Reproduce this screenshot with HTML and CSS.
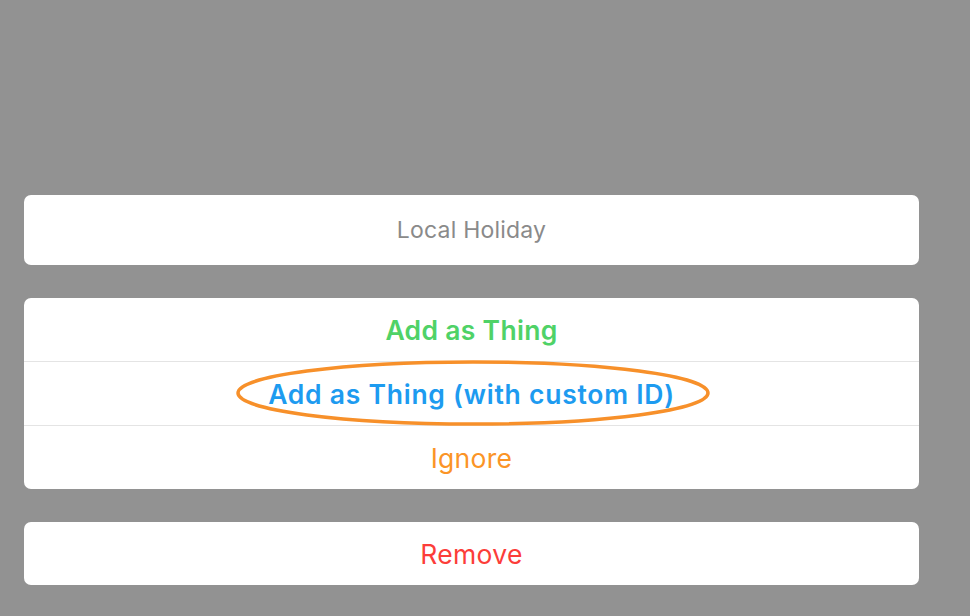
FILE: index.html
```html
<!DOCTYPE html>
<html lang="en">
<head>
<meta charset="utf-8">
<link rel="stylesheet" href="styles.css">
</head>
<body>
<div class="sheet">
  <div class="card title-card">
    <div class="row title">Local Holiday</div>
  </div>
  <div class="card actions">
    <div class="row green">Add as Thing</div>
    <div class="row blue">Add as Thing (with custom ID)</div>
    <div class="row orange">Ignore</div>
    <svg class="ring" width="480" height="70" viewBox="0 0 480 70">
      <ellipse cx="240" cy="35" rx="235" ry="31" fill="none" stroke="#f7902a" stroke-width="3.5"/>
    </svg>
  </div>
  <div class="card">
    <div class="row red">Remove</div>
  </div>
</div>
</body>
</html>
```
FILE: styles.css
```css
html, body {
  margin: 0;
  padding: 0;
  background: #929292;
  height: 100%;
}
body {
  font-family: Inter, "Open Sans", "Liberation Sans", sans-serif;
}
.sheet {
  padding: 195px 51px 0 24px;
  display: flex;
  flex-direction: column;
  gap: 33px;
}
.card {
  background: #ffffff;
  border-radius: 7px;
  display: flex;
  flex-direction: column;
  position: relative;
}
.row {
  height: 63px;
  display: flex;
  align-items: center;
  justify-content: center;
  font-size: 26.5px;
  font-weight: 400;
  letter-spacing: 0.3px;
}
.actions .row + .row {
  border-top: 1px solid #e4e4e4;
}
.title-card .row {
  height: 70px;
}
.title {
  color: #8a8a8a;
  font-size: 23px;
  letter-spacing: 0.2px;
}
.green { color: #4fd267; font-weight: 600; }
.blue { color: #1d9bf0; font-weight: 600; letter-spacing: 0.75px; }
.orange { color: #fb9426; }
.red { color: #fc3d39; }
.ring {
  position: absolute;
  left: 209px;
  top: 60px;
  pointer-events: none;
}
```
